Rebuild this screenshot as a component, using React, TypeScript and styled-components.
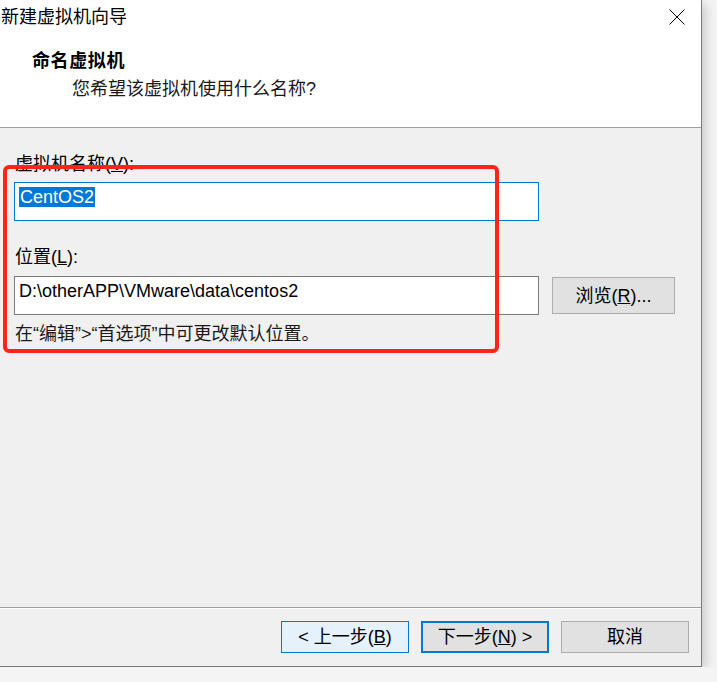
import React from "react";
import styled, { createGlobalStyle } from "styled-components";

const FONT = `"Liberation Sans", "Noto Sans CJK SC", sans-serif`;

const Global = createGlobalStyle`
  html, body {
    margin: 0;
    padding: 0;
    background: #f4f4f4;
    overflow: hidden;
  }
  body {
    font-family: ${FONT};
  }
`;

const Window = styled.div`
  position: relative;
  box-sizing: border-box;
  width: 702px;
  height: 667px;
  background: #f0f0f0;
  border-right: 1px solid #7a7a7a;
  border-bottom: 1px solid #7a7a7a;
  box-shadow: 2px 3px 12px rgba(0, 0, 0, 0.22);
  display: flex;
  flex-direction: column;
  font-family: ${FONT};
  font-size: 18px;
  color: #000;
`;

const TitleBar = styled.div`
  height: 36px;
  background: #fff;
  display: flex;
  align-items: center;
  justify-content: space-between;
  padding: 0 16px 0 1px;
`;

const TitleText = styled.div`
  font-size: 18px;
  line-height: 24px;
  margin-top: -2px;
`;

const CloseIcon = styled.svg`
  width: 16px;
  height: 16px;
  margin-top: -2px;
`;

const Header = styled.div`
  box-sizing: border-box;
  height: 92px;
  background: #fff;
  border-bottom: 1px solid #a0a0a0;
  padding: 13px 0 0 32px;
  display: flex;
  flex-direction: column;
  gap: 4px;
`;

const HeaderTitle = styled.div`
  font-weight: 700;
  font-size: 18px;
  line-height: 24px;
  letter-spacing: 0.6px;
`;

const HeaderSub = styled.div`
  padding-left: 40px;
  font-size: 18px;
  line-height: 24px;
  color: #1a1a1a;
`;

const Content = styled.div`
  flex: 1;
  padding: 24px 0 0 14px;
  display: flex;
  flex-direction: column;
`;

const Label = styled.div<{ $gap: number }>`
  padding-left: 1px;
  line-height: 24px;
  margin-bottom: ${(p) => p.$gap}px;
`;

const Row = styled.div`
  display: flex;
  align-items: center;
  gap: 13px;
`;

const TextBox = styled.div<{ $focused?: boolean }>`
  box-sizing: border-box;
  width: 525px;
  height: 39px;
  background: #fff;
  border: 1px solid ${(p) => (p.$focused ? "#0078d7" : "#7a7a7a")};
  padding: 2px 4px;
  line-height: 24px;
  white-space: nowrap;
`;

const Selected = styled.span`
  background: #0078d7;
  color: #fff;
  padding: 0 1px;
`;

const Help = styled.div`
  margin-top: 7px;
  padding-left: 1px;
  line-height: 24px;
  color: #1a1a1a;
`;

const Spacer = styled.div`
  height: 24px;
`;

const Footer = styled.div`
  box-sizing: border-box;
  height: 59px;
  border-top: 1px solid #a0a0a0;
  box-shadow: inset 0 1px 0 #ffffff;
  padding: 13px 12px 0 0;
  display: flex;
  justify-content: flex-end;
  align-items: flex-start;
  gap: 12px;
`;

const Button = styled.button<{ $variant: "hover" | "default" | "plain"; $w?: number; $h?: number }>`
  box-sizing: border-box;
  width: ${(p) => p.$w ?? 128}px;
  height: ${(p) => p.$h ?? 32}px;
  font-family: ${FONT};
  font-size: 18px;
  line-height: 22px;
  color: #000;
  padding: 0;
  border-radius: 0;
  background: ${(p) => (p.$variant === "hover" ? "#e5f1fb" : "#e1e1e1")};
  border: ${(p) =>
    p.$variant === "hover"
      ? "1px solid #0078d7"
      : p.$variant === "default"
      ? "2px solid #0078d7"
      : "1px solid #adadad"};
  display: flex;
  align-items: center;
  justify-content: center;
  white-space: pre;
`;

const Annotation = styled.div`
  position: absolute;
  left: 3px;
  top: 165px;
  width: 496px;
  height: 188px;
  box-sizing: border-box;
  border: 4px solid #ff2419;
  border-radius: 6px;
  pointer-events: none;
`;

export default function App() {
  return (
    <>
      <Global />
      <Window>
        <TitleBar>
          <TitleText>新建虚拟机向导</TitleText>
          <CloseIcon viewBox="0 0 16 16">
            <path d="M0.5 0.5 L15.5 15.5 M15.5 0.5 L0.5 15.5" stroke="#000" strokeWidth="1" fill="none" />
          </CloseIcon>
        </TitleBar>
        <Header>
          <HeaderTitle>命名虚拟机</HeaderTitle>
          <HeaderSub>您希望该虚拟机使用什么名称?</HeaderSub>
        </Header>
        <Content>
          <Label $gap={6}>
            虚拟机名称(<u>V</u>):
          </Label>
          <TextBox $focused>
            <Selected>CentOS2</Selected>
          </TextBox>
          <Spacer />
          <Label $gap={7}>
            位置(<u>L</u>):
          </Label>
          <Row>
            <TextBox>D:\otherAPP\VMware\data\centos2</TextBox>
            <Button $variant="plain" $w={123} $h={37}>
              浏览(<u>R</u>)...
            </Button>
          </Row>
          <Help>在“编辑”&gt;“首选项”中可更改默认位置。</Help>
        </Content>
        <Footer>
          <Button $variant="hover">
            {"< 上一步("}
            <u>B</u>
            {")"}
          </Button>
          <Button $variant="default">
            {"下一步("}
            <u>N</u>
            {") >"}
          </Button>
          <Button $variant="plain">取消</Button>
        </Footer>
        <Annotation />
      </Window>
    </>
  );
}
